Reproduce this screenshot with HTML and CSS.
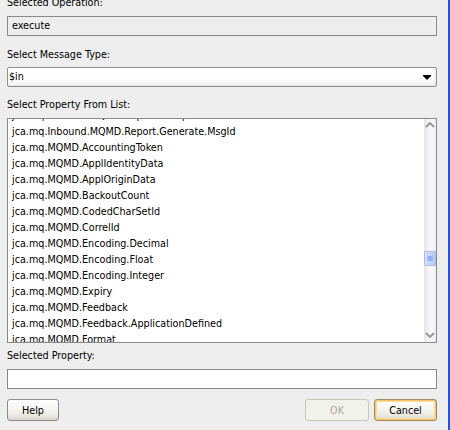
FILE: index.html
```html
<!DOCTYPE html>
<html>
<head>
<meta charset="utf-8">
<link rel="stylesheet" href="styles.css">
</head>
<body>
<div class="window">
  <div class="content">
    <div class="label l1">Selected Operation:</div>
    <div class="field readonly">execute</div>
    <div class="label l2">Select Message Type:</div>
    <div class="combo">
      <span class="combo-text">$in</span>
      <span class="arrow"></span>
    </div>
    <div class="label l3">Select Property From List:</div>
    <div class="list">
      <ul class="items">
        <li>jca.mq.Inbound.MQMD.Report.Exception</li>
        <li>jca.mq.Inbound.MQMD.Report.Generate.MsgId</li>
        <li>jca.mq.MQMD.AccountingToken</li>
        <li>jca.mq.MQMD.ApplIdentityData</li>
        <li>jca.mq.MQMD.ApplOriginData</li>
        <li>jca.mq.MQMD.BackoutCount</li>
        <li>jca.mq.MQMD.CodedCharSetId</li>
        <li>jca.mq.MQMD.CorrelId</li>
        <li>jca.mq.MQMD.Encoding.Decimal</li>
        <li>jca.mq.MQMD.Encoding.Float</li>
        <li>jca.mq.MQMD.Encoding.Integer</li>
        <li>jca.mq.MQMD.Expiry</li>
        <li>jca.mq.MQMD.Feedback</li>
        <li>jca.mq.MQMD.Feedback.ApplicationDefined</li>
        <li>jca.mq.MQMD.Format</li>
      </ul>
      <div class="scrollbar">
        <svg class="chev up" width="10" height="6" viewBox="0 0 10 6"><polyline points="1,5 5,1 9,5" fill="none" stroke="#9a9a9a" stroke-width="2"/></svg>
        <span class="thumb"><span class="grip"></span></span>
        <svg class="chev down" width="10" height="6" viewBox="0 0 10 6"><polyline points="1,1 5,5 9,1" fill="none" stroke="#9a9a9a" stroke-width="2"/></svg>
      </div>
    </div>
    <div class="label l4">Selected Property:</div>
    <div class="field"></div>
    <div class="buttons">
      <button class="btn help">Help</button>
      <span class="spacer"></span>
      <button class="btn ok" disabled>OK</button>
      <button class="btn cancel">Cancel</button>
    </div>
  </div>
</div>
</body>
</html>
```
FILE: styles.css
```css
html, body {
  margin: 0;
  padding: 0;
}
body {
  width: 450px;
  height: 430px;
  overflow: hidden;
  background: #eeeeee;
  font-family: "DejaVu Sans Condensed", "DejaVu Sans", sans-serif;
  font-stretch: condensed;
  font-size: 10.7px;
  color: #000;
}
.window {
  height: 430px;
  border-right: 2px solid #1f52e2;
  box-sizing: border-box;
  width: 450px;
}
.content {
  display: flex;
  flex-direction: column;
  padding: 0 11px 0 7px;
}
.label {
  height: 14px;
  line-height: 14px;
  white-space: nowrap;
}
.l1 { margin-top: -4px; }
.l2 { margin-top: 12px; }
.l3 { margin-top: 11px; }
.l4 { margin-top: 6px; }

.field {
  margin-top: 6px;
  height: 20px;
  box-sizing: border-box;
  border: 1px solid #8a8a8a;
  background: #fff;
  line-height: 18px;
  padding-left: 4px;
}
.field.readonly {
  background: #eeeeee;
}
.combo {
  margin-top: 5px;
  height: 20px;
  box-sizing: border-box;
  border: 1px solid #909090;
  border-radius: 2px;
  background: linear-gradient(#ffffff 0%, #ffffff 55%, #f1f1f1 100%);
  display: flex;
  align-items: center;
  padding: 0 5px 0 1px;
  box-shadow: inset -2px -1px 1px rgba(0,0,0,0.06);
}
.combo-text {
  flex: 1;
  line-height: 18px;
}
.arrow {
  width: 0;
  height: 0;
  border-left: 4px solid transparent;
  border-right: 4px solid transparent;
  border-top: 4px solid #000;
  position: relative;
  top: 1px;
}
.arrow::before {
  content: "";
  position: absolute;
  left: -4px;
  top: -5px;
  width: 8px;
  height: 1px;
  background: #000;
}

.list {
  margin-top: 6px;
  height: 225px;
  box-sizing: border-box;
  border: 1px solid #8a8a8a;
  background: #fff;
  display: flex;
  overflow: hidden;
}
.items {
  flex: 1;
  list-style: none;
  margin: -11px 0 0 0;
  padding: 0;
  overflow: hidden;
}
.items li {
  height: 16px;
  line-height: 16px;
  padding-left: 4px;
  white-space: nowrap;
}
.scrollbar {
  width: 12px;
  position: relative;
  background: linear-gradient(to right, #e4e4e8 0%, #f4f2f8 35%, #fbf8fd 60%, #efebf4 100%);
}
.chev {
  position: absolute;
  left: 1px;
}
.chev.up { top: 3px; }
.chev.down { bottom: 4px; }
.thumb {
  position: absolute;
  left: 0;
  top: 132px;
  width: 12px;
  height: 15px;
  box-sizing: border-box;
  border: 1px solid #a9bde8;
  border-radius: 1px;
  background: linear-gradient(to right, #d6e2fb, #c3d5fa 50%, #b8cbf3);
  display: flex;
  align-items: center;
  justify-content: center;
}
.grip {
  width: 6px;
  height: 5px;
  border-radius: 2px;
  background: #7f9ff0;
  opacity: 0.7;
}

.buttons {
  margin-top: 10px;
  display: flex;
  height: 22px;
}
.spacer { flex: 1; }
.btn {
  font: inherit;
  font-stretch: condensed;
  height: 22px;
  box-sizing: border-box;
  border: 1px solid #8c8c8c;
  border-radius: 3px;
  background: linear-gradient(#ffffff 0%, #f6f5f1 45%, #e9e7e0 80%, #d8d4cb 100%);
  color: #000;
  padding: 0;
  margin: 0;
}
.help { width: 52px; }
.ok {
  width: 64px;
  border-color: #c9c7ba;
  background: #f3f2ea;
  color: #aca899;
}
.cancel {
  width: 63px;
  margin-left: 5px;
  border-color: #9b8a66;
  box-shadow: inset 0 0 0 1px #f6c46a, inset 0 0 0 2px #fbdba0;
}
```
